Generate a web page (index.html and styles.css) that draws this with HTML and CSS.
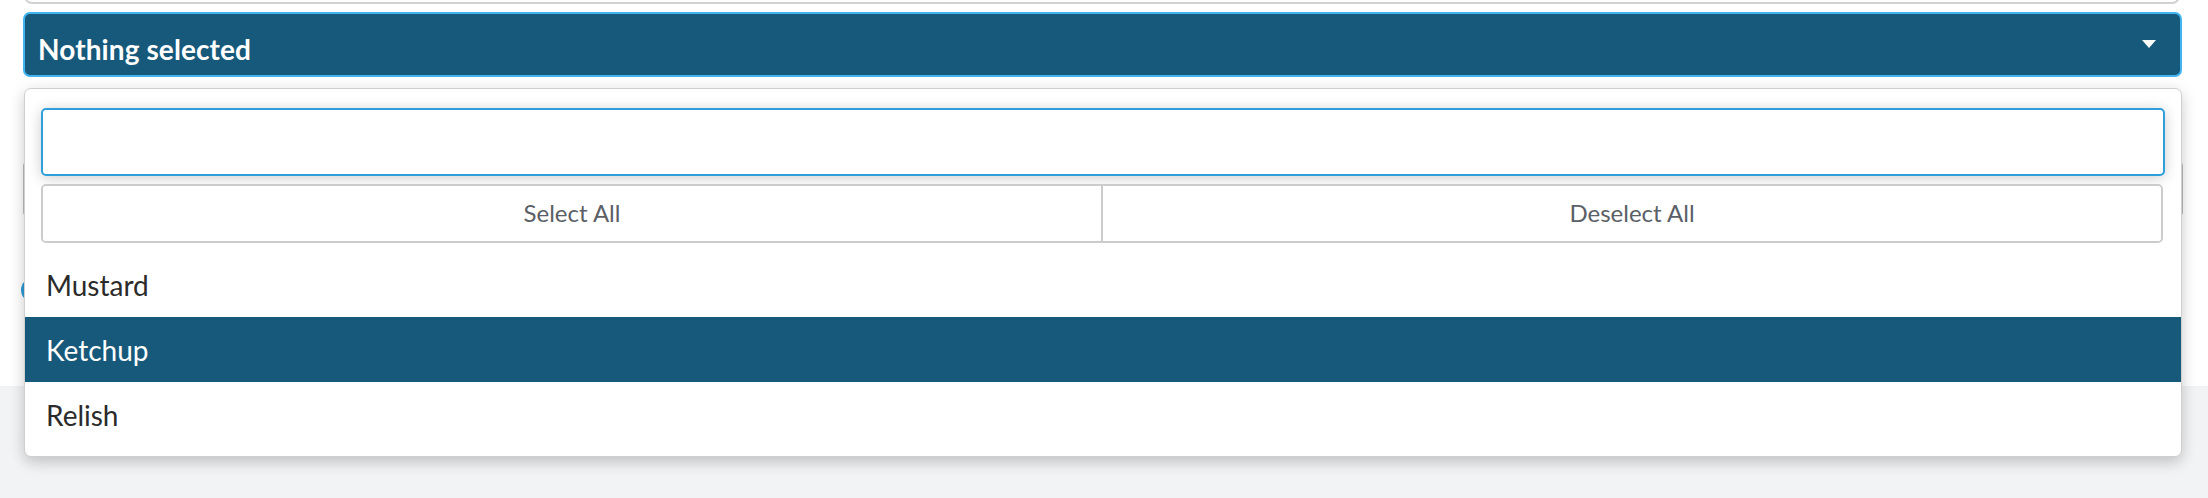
FILE: index.html
```html
<!DOCTYPE html>
<html>
<head>
<meta charset="utf-8">
<link rel="stylesheet" href="styles.css">
</head>
<body>
<div class="page">
  <div class="stub"></div>
  <div class="select">
    <button class="toggle" type="button">
      <span class="toggle-text">Nothing selected</span>
      <span class="caret"></span>
    </button>
    <div class="menu">
      <div class="menu-head">
        <input class="search" type="text">
        <div class="actions">
          <button class="action" type="button">Select All</button>
          <button class="action" type="button">Deselect All</button>
        </div>
      </div>
      <ul class="options">
        <li class="option">Mustard</li>
        <li class="option active">Ketchup</li>
        <li class="option">Relish</li>
      </ul>
    </div>
  </div>
  <div class="behind-field"></div>
  <div class="behind-radio"></div>
</div>
<div class="footer"></div>
</body>
</html>
```
FILE: styles.css
```css
html, body {
  margin: 0;
  padding: 0;
}
body {
  background: #f2f3f5;
  font-family: Lato, "Open Sans", sans-serif;
  overflow: hidden;
}
.page {
  background: #ffffff;
  height: 406px;
  padding: 0 26px 0 23px;
  box-sizing: border-box;
  overflow: visible;
  position: relative;
}
.stub {
  margin: -20px 2px 0 1px;
  height: 22px;
  border: 2px solid #d2d2d2;
  border-top: none;
  border-radius: 0 0 8px 8px;
}
.select {
  position: relative;
  margin-top: 8px;
  z-index: 2;
}
.toggle {
  display: flex;
  align-items: center;
  justify-content: space-between;
  width: 100%;
  height: 65px;
  box-sizing: border-box;
  margin: 0;
  background: #17597a;
  border: 2px solid #42b4f0;
  border-radius: 7px;
  padding: 0 24px 0 13px;
  color: #ffffff;
  font-family: Lato, "Open Sans", sans-serif;
  font-size: 28px;
  font-weight: 700;
}
.toggle-text {
  display: block;
  padding-top: 9px;
  letter-spacing: 0.1px;
}
.caret {
  width: 0;
  height: 0;
  border-left: 7.5px solid transparent;
  border-right: 7.5px solid transparent;
  border-top: 8px solid #ffffff;
  margin-top: -1px;
}
.menu {
  position: absolute;
  top: calc(100% + 11px);
  left: 1px;
  right: 0;
  background: #ffffff;
  border: 1px solid #cfcfcf;
  border-radius: 7px;
  box-shadow: 0 6px 14px rgba(0, 0, 0, 0.16), 0 0 20px rgba(0, 0, 0, 0.06);
  padding-bottom: 9px;
}
.menu-head {
  padding: 19px 16px 0 16px;
}
.search {
  display: block;
  width: 100%;
  height: 68px;
  box-sizing: border-box;
  margin: 0;
  border: 2px solid #2f9fdc;
  border-radius: 5px;
  box-shadow: 0 2px 14px rgba(0, 0, 0, 0.2);
  outline: none;
  font-size: 26px;
  padding: 0 14px;
}
.actions {
  display: flex;
  margin: 8px 2px 0 0;
  height: 59px;
  box-sizing: border-box;
  border: 2px solid #cccccc;
  border-radius: 5px;
  overflow: hidden;
}
.action {
  flex: 1 1 0;
  margin: 0;
  background: #ffffff;
  border: none;
  color: #5b6066;
  font-family: Lato, "Open Sans", sans-serif;
  font-size: 24px;
  padding: 0 0 2px 0;
}
.action + .action {
  border-left: 2px solid #cccccc;
}
.options {
  list-style: none;
  margin: 9px 0 0 0;
  padding: 0;
}
.option {
  height: 65px;
  display: flex;
  align-items: center;
  padding: 0 21px;
  font-size: 28px;
  color: #2b2b2b;
}
.option.active {
  background: #17597a;
  color: #ffffff;
}
.behind-field {
  margin: 83px -1px 0 0;
  height: 58px;
  border: 2px solid #bdbdbd;
  border-radius: 6px;
  box-sizing: border-box;
}
.behind-radio {
  margin: 60px 0 0 -2px;
  width: 24px;
  height: 24px;
  border-radius: 50%;
  background: #2e9ad6;
}
.footer {
  height: 92px;
}
```
